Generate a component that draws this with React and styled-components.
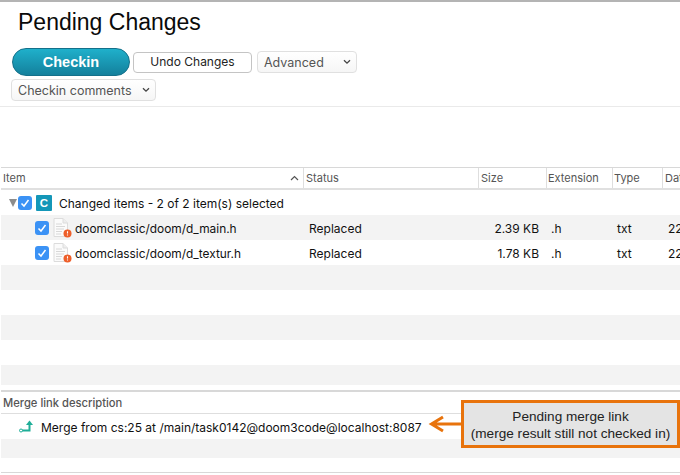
import React from 'react';
import styled, { createGlobalStyle } from 'styled-components';

const GlobalStyle = createGlobalStyle`
	html, body {
		margin: 0;
		padding: 0;
		background: #fff;
		overflow: hidden;
	}
	body {
		font-family: "Inter", "Liberation Sans", sans-serif;
		color: #111;
	}
`;

const Page = styled.div`
	position: relative;
	width: 680px;
	height: 475px;
	overflow: hidden;
	border-top: 2px solid #b4b4b4;
	box-sizing: border-box;
`;

const Title = styled.h1`
	margin: 0;
	padding: 7px 0 0 18px;
	height: 39px;
	box-sizing: border-box;
	font: 400 23px/27px "Liberation Sans", sans-serif;
	color: #0a0a0a;
`;

const Toolbar = styled.div`
	height: 58px;
	padding: 7px 0 0 11px;
	border-bottom: 1px solid #eaeaea;
	display: flex;
	flex-direction: column;
	gap: 3px;
`;

const ToolRow = styled.div`
	display: flex;
	align-items: center;
	height: 28px;
	margin-left: 1px;
`;

const CheckinButton = styled.button`
	width: 118px;
	height: 28px;
	border: 1px solid #14708a;
	border-radius: 14px;
	background: linear-gradient(#1fb0cb, #14809c);
	color: #fff;
	font: 700 14.5px "Liberation Sans", sans-serif;
	padding: 0;
`;

const UndoButton = styled.button`
	width: 119px;
	height: 21px;
	margin: 0 5px 0 3px;
	border: 1px solid #c4c4c4;
	border-radius: 4px;
	background: #fff;
	color: #222;
	font: 400 12px "Inter", sans-serif;
	padding: 0 0 2px;
`;

const SelectBox = styled.div`
	width: ${p => p.$width}px;
	height: 22px;
	box-sizing: border-box;
	padding: 0 5px 0 6px;
	border: 1px solid #e0e0e0;
	border-radius: 4px;
	background: linear-gradient(#fff, #f6f6f6);
	display: flex;
	align-items: center;
	justify-content: space-between;
	color: #555;
	font-size: 12.5px;
`;

const Spacer = styled.div`
	height: 60px;
`;

const HeaderRow = styled.div`
	display: grid;
	grid-template-columns: 303px 175px 68px 66px 50px 1fr;
	height: 20px;
	border-top: 1px solid #d8d8d8;
	border-bottom: 2px solid #e0e0e0;
	margin-left: 1px;
`;

const HeaderCell = styled.div`
	display: flex;
	align-items: center;
	justify-content: space-between;
	padding: 0 4px 0 ${p => p.$pad || 2}px;
	border-right: ${p => (p.$last ? 'none' : '1px solid #dedede')};
	color: #555;
	font-size: 11px;
	white-space: nowrap;
	overflow: hidden;
`;

const Row = styled.div`
	display: grid;
	grid-template-columns: 303px 175px 68px 66px 50px 1fr;
	height: ${p => p.$height || 25}px;
	margin-left: 1px;
	background: ${p => (p.$shaded ? '#f3f3f3' : '#fff')};
	align-items: center;
	font-size: 12px;
	color: #111;
`;

const GroupRow = styled.div`
	height: 25px;
	display: flex;
	align-items: center;
	margin-left: 1px;
	padding-left: 8px;
	font-size: 12px;
`;

const ItemCell = styled.div`
	display: flex;
	align-items: center;
	padding-left: 34px;
	font-size: 11.9px;
`;

const RowLabel = styled.span`
	padding-top: 2px;
`;

const Cell = styled.div`
	padding-top: 2px;
	padding-left: ${p => p.$pad || 0}px;
	padding-right: ${p => p.$padRight || 0}px;
	text-align: ${p => p.$align || 'left'};
	white-space: nowrap;
	overflow: hidden;
`;

const Triangle = styled.span`
	width: 0;
	height: 0;
	border-left: 4.5px solid transparent;
	border-right: 4.5px solid transparent;
	border-top: 8px solid #8c8c8c;
	margin-right: 1px;
`;

const Check = styled.span`
	width: 14px;
	height: 14px;
	border-radius: 3px;
	background: #3b92f5;
	display: flex;
	align-items: center;
	justify-content: center;
	flex-shrink: 0;
`;

const Badge = styled.span`
	width: 16px;
	height: 16px;
	margin: 0 7px 0 4px;
	background: #1497b8;
	border-radius: 1px;
	color: #fff;
	font: 700 11.5px/16px "Liberation Sans", sans-serif;
	text-align: center;
`;

const FileWrap = styled.span`
	width: 19px;
	height: 20px;
	margin: 0 3px 0 4px;
	flex-shrink: 0;
`;

const MergePanel = styled.div`
	margin-top: 5px;
	margin-left: 1px;
	border-top: 2px solid #d8d8d8;
`;

const MergeTitle = styled.div`
	height: 21px;
	padding-left: 2px;
	display: flex;
	align-items: center;
	border-bottom: 1px solid #dedede;
	color: #555;
	font-size: 11.2px;
	font-weight: 500;
`;

const MergeRow = styled.div`
	height: 25px;
	display: flex;
	align-items: center;
	padding-left: 18px;
	gap: 7px;
	font-size: 12px;
`;

const MergeEmpty = styled.div`
	height: 19px;
	background: #f3f3f3;
`;

const BottomLine = styled.div`
	height: 14px;
	border-bottom: 1px solid #d8d8d8;
`;

const Callout = styled.div`
	position: absolute;
	left: 461px;
	top: 398px;
	width: 219px;
	height: 48px;
	box-sizing: border-box;
	border: 3px solid #e8730c;
	background: #e4e4e4;
	color: #222;
	font: 400 13.6px/17px "Liberation Sans", sans-serif;
	text-align: center;
	padding-top: 5px;
	white-space: nowrap;
`;

const ArrowMark = styled.svg`
	position: absolute;
	left: 428px;
	top: 412px;
`;

const Tick = () => (
	<Check>
		<svg width="10" height="10" viewBox="0 0 10 10">
			<path d="M1.5 5.5 L4 8 L8.5 2" fill="none" stroke="#fff" strokeWidth="1.5" />
		</svg>
	</Check>
);

const Chevron = () => (
	<svg width="8" height="6" viewBox="0 0 8 6">
		<path d="M1 1.2 L4 4.2 L7 1.2" fill="none" stroke="#444" strokeWidth="1.3" />
	</svg>
);

const FileIcon = () => (
	<FileWrap>
		<svg width="19" height="20" viewBox="0 0 19 20">
			<path d="M1 .5 H10 L14.5 5 V18.5 H1 Z" fill="#fbfbfb" stroke="#dcdcdc" />
			<path d="M10 .5 V5 H14.5" fill="#eeeeee" stroke="#dcdcdc" />
			<path d="M3 6 H9 M3 8.5 H12 M3 11 H11 M3 13.5 H9 M3 16 H8" stroke="#d8d8d8" strokeWidth="1" />
			<circle cx="14.5" cy="15.5" r="4" fill="#ee5f2a" />
			<path d="M14.5 13.2 V15.6 M14.5 16.6 V17.6" stroke="#fff" strokeWidth="1.1" />
		</svg>
	</FileWrap>
);

const files = [
	{ name: 'doomclassic/doom/d_main.h', size: '2.39 KB' },
	{ name: 'doomclassic/doom/d_textur.h', size: '1.78 KB' }
];

const App = () => (
	<Page>
		<GlobalStyle />
		<Title>Pending Changes</Title>
		<Toolbar>
			<ToolRow>
				<CheckinButton>Checkin</CheckinButton>
				<UndoButton>Undo Changes</UndoButton>
				<SelectBox $width={100}>
					Advanced
					<Chevron />
				</SelectBox>
			</ToolRow>
			<SelectBox $width={145}>
				Checkin comments
				<Chevron />
			</SelectBox>
		</Toolbar>
		<Spacer />
		<HeaderRow>
			<HeaderCell>
				Item
				<svg width="9" height="6" viewBox="0 0 9 6">
					<path d="M1 5 L4.5 1.5 L8 5" fill="none" stroke="#555" strokeWidth="1.2" />
				</svg>
			</HeaderCell>
			<HeaderCell>Status</HeaderCell>
			<HeaderCell>Size</HeaderCell>
			<HeaderCell $pad={1}>Extension</HeaderCell>
			<HeaderCell $pad={1}>Type</HeaderCell>
			<HeaderCell $last>Date</HeaderCell>
		</HeaderRow>
		<GroupRow>
			<Triangle />
			<Tick />
			<Badge>C</Badge>
			<RowLabel>Changed items - 2 of 2 item(s) selected</RowLabel>
		</GroupRow>
		{files.map((file, i) => (
			<Row key={file.name} $shaded={i === 0}>
				<ItemCell>
					<Tick />
					<FileIcon />
					<RowLabel>{file.name}</RowLabel>
				</ItemCell>
				<Cell $pad={5}>Replaced</Cell>
				<Cell $align="right" $padRight={8}>
					{file.size}
				</Cell>
				<Cell $pad={4}>.h</Cell>
				<Cell $pad={4}>txt</Cell>
				<Cell $pad={5}>22</Cell>
			</Row>
		))}
		<Row $shaded />
		<Row />
		<Row $shaded />
		<Row />
		<Row $shaded $height={20} />
		<MergePanel>
			<MergeTitle>Merge link description</MergeTitle>
			<MergeRow>
				<svg width="15" height="13" viewBox="0 0 15 13">
					<path d="M3 10.5 H10.5 V3.5" fill="none" stroke="#1fae98" strokeWidth="2" />
					<path d="M7 5 L10.5 .5 L14 5 Z" fill="#1fae98" />
					<circle cx="2" cy="10.5" r="1.5" fill="#fff" stroke="#1fae98" />
				</svg>
				<RowLabel>Merge from cs:25 at /main/task0142@doom3code@localhost:8087</RowLabel>
			</MergeRow>
			<MergeEmpty />
			<BottomLine />
		</MergePanel>
		<ArrowMark width="34" height="20" viewBox="0 0 34 20">
			<path d="M33 10 H3 M15 3 L3.5 10 L15 17" fill="none" stroke="#e8730c" strokeWidth="3" />
		</ArrowMark>
		<Callout>
			Pending merge link
			<br />
			(merge result still not checked in)
		</Callout>
	</Page>
);

export default App;
